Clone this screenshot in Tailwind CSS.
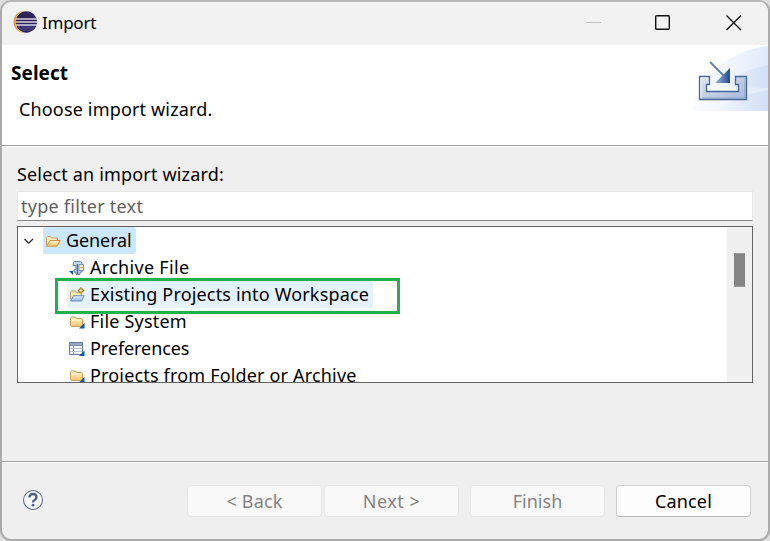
<!DOCTYPE html>
<html lang="en">
<head>
<meta charset="utf-8">
<title>Import</title>
<script src="https://cdn.jsdelivr.net/npm/@tailwindcss/browser@4"></script>
</head>
<body class="h-[541px] w-[770px] overflow-hidden bg-[#dedede] font-['Noto_Sans','Open_Sans',sans-serif] text-[18px] leading-[27px] text-black">
<svg class="absolute h-0 w-0">
  <defs>
    <linearGradient id="gold" x2="0" y2="1"><stop stop-color="#fff3cb"/><stop offset="1" stop-color="#f2c673"/></linearGradient>
    <linearGradient id="blue" x2="0" y2="1"><stop stop-color="#e6f2ff"/><stop offset="1" stop-color="#8db7e8"/></linearGradient>
    <symbol id="folder" viewBox="0 0 16 16">
      <path d="M1.500 11.500v-7l1-1.500h4l1 1.500h5l1 1v6l-1 1h-10z" fill="url(#gold)" stroke="#cc9a55"/>
      <path d="M2.500 6h10" stroke="#fff8dc"/>
      <path d="M15.500 9v5.500h-5.500z" fill="#0b5aa5"/>
    </symbol>
  </defs>
</svg>
<div class="flex h-[541px] w-[770px] flex-col overflow-hidden rounded-[11px] border-2 border-[#aaaaaa] border-t-[#b7b7b7] bg-[#efefef]">
  <header class="flex h-[43px] shrink-0 items-center bg-[#f2f2f2] pl-[11px]">
    <svg class="-mt-[4px] h-6 w-[25px] shrink-0" viewBox="0 0 25 24">
      <circle cx="11.500" cy="12" r="11" fill="#f7931e"/>
      <circle cx="13.500" cy="12" r="11.200" fill="#f2f2f2"/>
      <circle cx="13.300" cy="12" r="10.700" fill="#2c2255"/>
      <path d="M4 14.500h19q-2 7-9.500 7T4 14.500z" fill="#41377b"/>
      <path d="M3 9h21M2.500 12h22M3 15h21" stroke="#d5d3e2" stroke-width="1.400"/>
    </svg>
    <span class="-mt-[3px] ml-1 text-[17px] tracking-[-0.25px]">Import</span>
    <div class="-mt-[2px] ml-auto flex items-center">
      <svg class="h-4 w-4" viewBox="0 0 16 16"><path d="M0 7.500h15" stroke="#c2c2c2"/></svg>
      <svg class="ml-[53px] h-4 w-4" viewBox="0 0 16 16"><rect x=".7" y=".7" width="13.600" height="13.600" rx="1" fill="none" stroke="#111" stroke-width="1.400"/></svg>
      <svg class="ml-[55px] mr-[26px] h-4 w-4" viewBox="0 0 16 16"><path d="M.5.5l14.500 14.500M15 .5L.5 15" stroke="#111" stroke-width="1.400"/></svg>
    </div>
  </header>

  <section class="flex h-[102px] shrink-0 justify-between border-b border-white bg-white shadow-[inset_0_-1px_0_#9f9f9f]">
    <div class="pl-[9px] pt-[15px]">
      <h1 class="text-[19px] font-bold leading-[27px] tracking-[0.05px]">Select</h1>
      <p class="mt-[9px] pl-2 tracking-[0.16px]">Choose import wizard.</p>
    </div>
    <svg class="h-[66px] w-[75px]" viewBox="0 0 75 66">
      <defs>
        <linearGradient id="arc"><stop stop-color="#f9fbff"/><stop offset=".6" stop-color="#f0f4fd"/><stop offset="1" stop-color="#e0e9fa"/></linearGradient>
        <linearGradient id="sweep"><stop stop-color="#c6d6f5" stop-opacity="0"/><stop offset="1" stop-color="#c6d6f5" stop-opacity=".5"/></linearGradient>
        <linearGradient id="tray" x2="1" y2="1"><stop stop-color="#dfe5f2"/><stop offset="1" stop-color="#a7b8da"/></linearGradient>
        <linearGradient id="arrow"><stop stop-color="#9fb8dc"/><stop offset=".5" stop-color="#5f82ba"/><stop offset=".95" stop-color="#2c4e8c"/></linearGradient>
      </defs>
      <path d="M0 66Q5 38 29 19Q49 4 75 1V66z" fill="url(#arc)"/>
      <path d="M25 42Q44 26 75 20V43z" fill="url(#sweep)"/>
      <path d="M22 66Q41 50 75 45V66z" fill="url(#sweep)"/>
      <path d="M6.500 31.500h10v8h-3v7h32v-7h-3v-8h11v23h-47z" fill="url(#tray)" stroke="#456798" stroke-width="1.300"/>
      <path d="M8 53v-20h7" fill="none" stroke="#f3f6fb"/>
      <path d="M52 33v20h-43" fill="none" stroke="#8fa4cd"/>
      <path d="M17 17l14 14" stroke="#5b80b5" stroke-width="1.800"/>
      <path d="M37 23v15H22z" fill="url(#arrow)"/>
    </svg>
  </section>

  <main class="flex h-[314px] shrink-0 flex-col pl-[15px] pr-[15px] pt-[14px]">
    <label class="h-[30px] tracking-[0.17px]">Select an import wizard:</label>
    <div class="flex h-[30px] w-[736px] shrink-0 items-center border border-[#e6e6e6] border-b-[#858585] bg-white pl-[3px] tracking-[0.25px] text-[#5f5f5f]">type filter text</div>
    <div class="relative mt-[5px] h-[157px] w-[736px] shrink-0">
      <div class="flex h-full overflow-hidden border border-[#646464] bg-white">
        <div class="flex flex-1 flex-col">
          <div class="flex h-[27px] shrink-0 items-center">
            <svg class="ml-[5px] mr-1 h-4 w-4" viewBox="0 0 16 16"><path d="M1.500 6l4.200 4.200L10 6" fill="none" stroke="#222" stroke-width="1.200"/></svg>
            <div class="flex h-[27px] w-[93px] items-center rounded-[2px] bg-[#cce8ff] pl-[2px]">
              <svg class="mr-[5px] h-4 w-4" viewBox="0 0 16 16"><path d="M1.500 12.500v-8l1-1h3l1 1.500h6v3" fill="#fff3c5" stroke="#cc9a55"/><path d="M1.500 13.200l3.500-5.700h10.300l-3.300 5.700z" fill="url(#gold)" stroke="#cc8f43"/></svg>
              <span class="tracking-[-0.1px]">General</span>
            </div>
          </div>
          <div class="flex h-[27px] shrink-0 items-center pl-[51px]">
            <svg class="mr-[5px] h-4 w-4" viewBox="0 0 16 16">
              <path d="M0 11h4v4z" fill="#0b5aa5"/>
              <path d="M4.500 2.500l1-1h6l1.500 1.500v9h-2v2.500h-4V12h-2V9.500h2v-4h-3z" fill="#cbd9ee" stroke="#6280ae"/>
              <path d="M8.500 4v10" stroke="#4b70a6" stroke-width="1.500"/>
              <path d="M10 4.500h4.500v6H10z" fill="#fff7df" stroke="#7d93b5"/>
              <path d="M11 7.500h3" stroke="#c9a25b"/>
            </svg>
            <span class="tracking-[0.3px]">Archive File</span>
          </div>
          <div class="flex h-[27px] shrink-0 items-center pl-[49px]">
            <div class="flex h-[27px] w-[306px] items-center rounded-[2px] bg-[#e5f3ff] pl-[2px]">
              <svg class="mr-[5px] h-4 w-4" viewBox="0 0 16 16"><path d="M1.500 12V5l1-1h4l1 1.500h5V9" fill="#ffe9aa" stroke="#c4a063"/><path d="M1.500 14l3-5.300h10.700l-2.700 5.300z" fill="url(#blue)" stroke="#6d91c6"/><path d="M12 0l3.500 3.500L12 7 8.500 3.500z" fill="#a77a16"/><path d="M12 1.500v4M10 3.500h4" stroke="#fff4a6"/></svg>
              <span class="tracking-[0.17px]">Existing Projects into Workspace</span>
            </div>
          </div>
          <div class="flex h-[27px] shrink-0 items-center pl-[51px]">
            <svg class="mr-[5px] h-4 w-4"><use href="#folder"/></svg><span class="tracking-[0.2px]">File System</span>
          </div>
          <div class="flex h-[27px] shrink-0 items-center pl-[51px]">
            <svg class="mr-[5px] h-4 w-4" viewBox="0 0 16 16"><path d="M.5 1.500h13v12H.5z" fill="#f7faff" stroke="#667c9f"/><path d="M1 2h12v2H1z" fill="#98aac5"/><path d="M1 4.500h12M4.500 2v11" stroke="#7d90ae"/><path d="M1 7.500h12M1 10.500h12" stroke="#b6c4d9"/><path d="M15.500 9.500v5.500H10z" fill="#0b5aa5"/></svg>
            <span class="tracking-[-0.08px]">Preferences</span>
          </div>
          <div class="flex h-[27px] shrink-0 items-center pl-[51px]">
            <svg class="mr-[5px] h-4 w-4"><use href="#folder"/></svg><span class="tracking-[0.17px]">Projects from Folder or Archive</span>
          </div>
        </div>
        <div class="w-[25px] bg-[#f0f0f0] pl-[7px] pt-[26px]"><div class="h-[34px] w-[11px] border-y border-[#999] bg-[#858585]"></div></div>
      </div>
      <div class="absolute left-[38px] top-[52px] h-[36px] w-[345px] border-[3px] border-[#22b14c]"></div>
    </div>
  </main>

  <footer class="flex flex-1 border-t border-[#a0a0a0] pl-[20px] pt-[23px] shadow-[inset_0_1px_0_#fff]">
    <svg class="mt-[4px] h-[22px] w-[22px]" viewBox="0 0 22 22"><circle cx="11" cy="11" r="9.500" fill="#f8f8f8" stroke="#617291" stroke-width="1.100"/><path d="M7.500 8.500Q7.500 5 11 5t3.500 3.200q0 1.800-1.900 2.900Q11 12 11 13.500" fill="none" stroke="#4d608c" stroke-width="2.300"/><circle cx="11" cy="16.200" r="1.400" fill="#4d608c"/></svg>
    <div class="ml-[143px] flex text-[#838383]">
      <button class="h-[32px] w-[135px] rounded-[4px] border border-[#e7e7e7] bg-[#f9f9f9] tracking-[0.2px]">&lt; Back</button>
      <button class="ml-[2px] h-[32px] w-[135px] rounded-[4px] border border-[#e7e7e7] bg-[#f9f9f9] tracking-[0.5px]">Next &gt;</button>
      <button class="ml-[11px] h-[32px] w-[135px] rounded-[4px] border border-[#e7e7e7] bg-[#f9f9f9]">Finish</button>
      <button class="ml-[11px] h-[32px] w-[135px] rounded-[4px] border border-[#d0d0d0] border-b-[#b8b8b8] bg-[#fdfdfd] tracking-[0.15px] text-black">Cancel</button>
    </div>
  </footer>
</div>
</body>
</html>
